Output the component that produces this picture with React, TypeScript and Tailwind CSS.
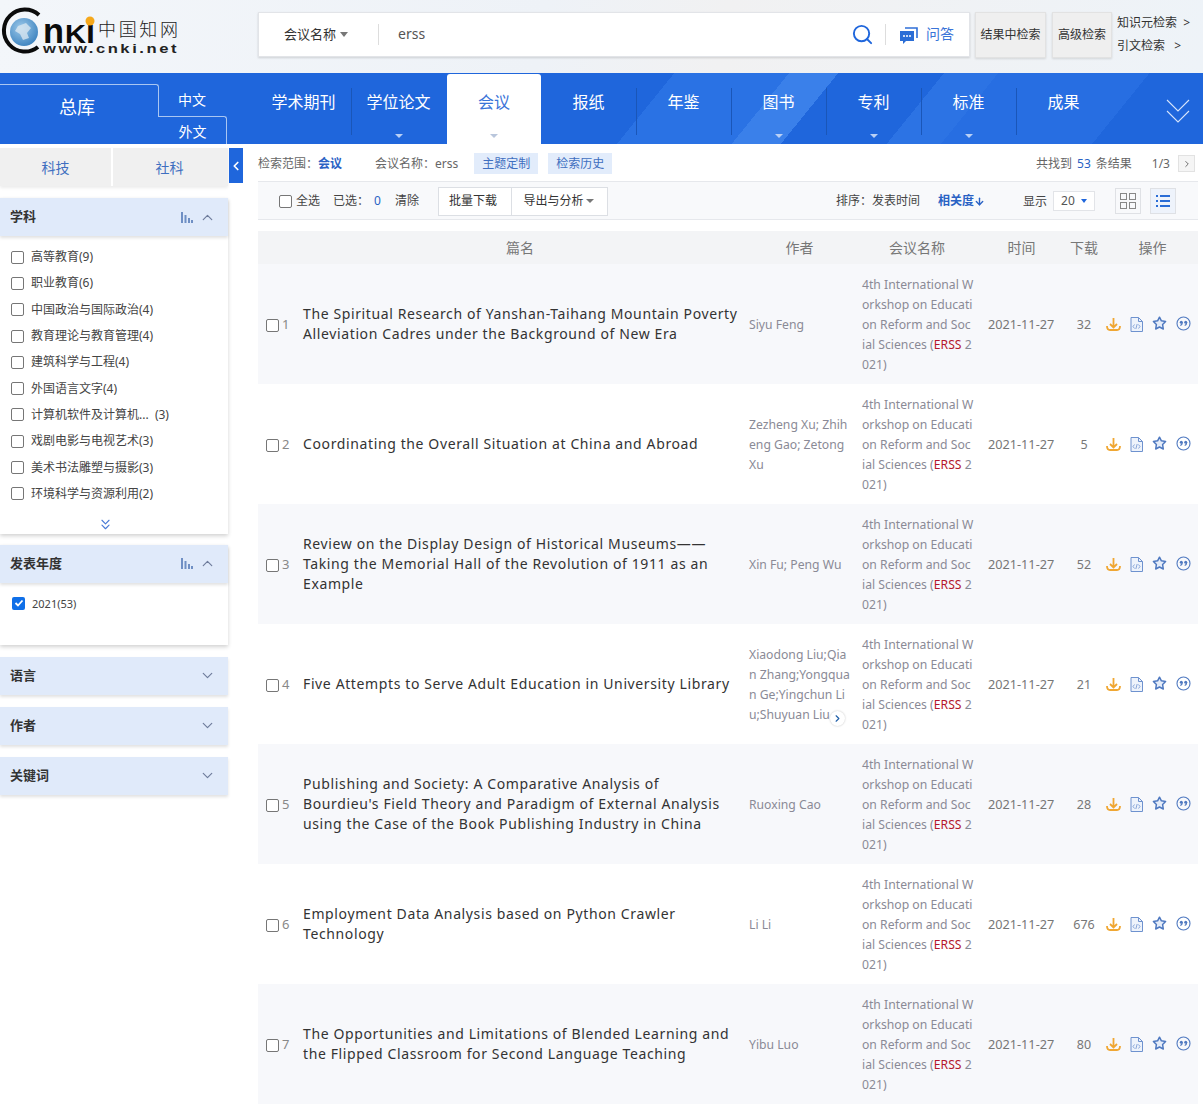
import { ChevronDown, ChevronLeft, ChevronRight, ChevronUp, ChevronsDown, ArrowDown, Search } from "lucide-react";

const navItems = [
  { label: "学术期刊", arrow: false },
  { label: "学位论文", arrow: true },
  { label: "会议", arrow: true, active: true },
  { label: "报纸", arrow: false },
  { label: "年鉴", arrow: false },
  { label: "图书", arrow: true },
  { label: "专利", arrow: true },
  { label: "标准", arrow: true },
  { label: "成果", arrow: false },
];

const subjects = [
  "高等教育(9)",
  "职业教育(6)",
  "中国政治与国际政治(4)",
  "教育理论与教育管理(4)",
  "建筑科学与工程(4)",
  "外国语言文字(4)",
  "计算机软件及计算机...  (3)",
  "戏剧电影与电视艺术(3)",
  "美术书法雕塑与摄影(3)",
  "环境科学与资源利用(2)",
];

const rows = [
  { title: "The Spiritual Research of Yanshan-Taihang Mountain Poverty Alleviation Cadres under the Background of New Era", author: ["Siyu Feng"], count: "32" },
  { title: "Coordinating the Overall Situation at China and Abroad", author: ["Zezheng Xu; Zhih", "eng Gao; Zetong", "Xu"], count: "5" },
  { title: "Review on the Display Design of Historical Museums—— Taking the Memorial Hall of the Revolution of 1911 as an Example", author: ["Xin Fu; Peng Wu"], count: "52" },
  { title: "Five Attempts to Serve Adult Education in University Library", author: ["Xiaodong Liu;Qia", "n Zhang;Yongqua", "n Ge;Yingchun Li", "u;Shuyuan Liu"], count: "21", more: true },
  { title: "Publishing and Society: A Comparative Analysis of Bourdieu's Field Theory and Paradigm of External Analysis using the Case of the Book Publishing Industry in China", author: ["Ruoxing Cao"], count: "28" },
  { title: "Employment Data Analysis based on Python Crawler Technology", author: ["Li Li"], count: "676" },
  { title: "The Opportunities and Limitations of Blended Learning and the Flipped Classroom for Second Language Teaching", author: ["Yibu Luo"], count: "80" },
];

function Logo() {
  return (
    <svg width="182" height="58" viewBox="0 0 182 58" className="shrink-0">
      <defs>
        <radialGradient id="globe" cx="0.4" cy="0.35" r="0.8">
          <stop offset="0" stopColor="#9cc9ea" />
          <stop offset="1" stopColor="#2f78b8" />
        </radialGradient>
      </defs>
      <path d="M39 15 A21 21 0 1 0 38 47" fill="none" stroke="#0b0b0b" strokeWidth="4" />
      <circle cx="24" cy="32" r="14" fill="url(#globe)" />
      <path d="M18 26l8-3 5 5-4 5 2 5-6 2-3-6-5-3z" fill="#dfeaf2" opacity="0.75" />
      <text x="43" y="43" fontFamily="Liberation Sans" fontWeight="700" fontSize="35" fill="#0b0b0b" textLength="21" lengthAdjust="spacingAndGlyphs">n</text>
      <text x="65" y="43" fontFamily="Liberation Sans" fontWeight="700" fontSize="25" fill="#0b0b0b" textLength="21" lengthAdjust="spacingAndGlyphs">K</text>
      <text x="86" y="43" fontFamily="Liberation Sans" fontWeight="700" fontSize="33" fill="#0b0b0b" textLength="9" lengthAdjust="spacingAndGlyphs">i</text>
      <circle cx="90" cy="21" r="4.500" fill="#f5a81c" />
      <text x="98" y="36" fontFamily="Noto Sans CJK SC" fontWeight="300" fontSize="18" fill="#222" textLength="80">中国知网</text>
      <text x="43" y="53" fontFamily="Liberation Sans" fontWeight="700" fontSize="13" letterSpacing="2" fill="#222" textLength="136" lengthAdjust="spacingAndGlyphs">www.cnki.net</text>
    </svg>
  );
}

function ChatIcon() {
  return (
    <svg width="20" height="20" viewBox="0 0 20 20">
      <path d="M6 3h12v10" fill="none" stroke="#2f6fd8" strokeWidth="1.600" />
      <path d="M1 6h14v10H7l-3 3v-3H1z" fill="#2a6dd6" />
      <circle cx="5" cy="11" r="1" fill="#fff" />
      <circle cx="8" cy="11" r="1" fill="#fff" />
      <circle cx="11" cy="11" r="1" fill="#fff" />
    </svg>
  );
}

function BarsIcon() {
  return (
    <svg width="13" height="11" viewBox="0 0 13 11">
      <path d="M1 0h2v11H1zM4.500 3h2v8h-2zM8 6h2v5H8zM11 8h2v3h-2z" fill="#6f8fc4" />
    </svg>
  );
}

function DownloadIcon() {
  return (
    <svg width="15" height="15" viewBox="0 0 15 15" fill="none" stroke="#f0a733" strokeWidth="1.800">
      <path d="M7.500 1v9.500M4 7l3.500 3.500L11 7" />
      <path d="M1 9c0 2.800 1.500 4 3 4h7c1.500 0 3-1.200 3-4" />
    </svg>
  );
}

function HtmlIcon() {
  return (
    <svg width="13" height="15" viewBox="0 0 13 15" fill="none" stroke="#6e92cf" strokeWidth="1">
      <path d="M1 .5h7.500l4 4v10H1z" fill="#eef3fb" />
      <path d="M8.500.5v4h4" />
      <path d="M4.500 7.500l-1.500 2 1.500 2M8.500 7.500l1.500 2-1.500 2M7.200 7l-1.400 5" strokeWidth="0.800" />
    </svg>
  );
}

function StarIcon() {
  return (
    <svg width="15" height="15" viewBox="0 0 15 15" className="mt-[-2px]" fill="#e4ecf9" stroke="#4f79c0" strokeWidth="1.500" strokeLinejoin="round">
      <path d="M7.500 1.200l1.900 3.600 4.200.7-3 3 .7 4.500-3.800-2-3.800 2 .7-4.500-3-3 4.200-.7z" />
    </svg>
  );
}

function QuoteIcon() {
  return (
    <svg width="15" height="15" viewBox="0 0 15 15" fill="none" className="mt-[-2px]">
      <circle cx="7.500" cy="7.500" r="6.500" stroke="#4f79c0" strokeWidth="1.100" />
      <circle cx="5.300" cy="6.300" r="1.500" fill="#4f79c0" />
      <circle cx="9.700" cy="6.300" r="1.500" fill="#4f79c0" />
      <path d="M6.300 6.500c0 1.500-.7 2.600-2 3.100M10.700 6.500c0 1.500-.7 2.600-2 3.100" stroke="#4f79c0" strokeWidth="1.100" />
    </svg>
  );
}

function Check({ checked = false }: { checked?: boolean }) {
  if (checked) {
    return (
      <span className="flex h-[13px] w-[13px] shrink-0 items-center justify-center rounded-[2px] bg-[#0f6fe8]">
        <svg width="10" height="10" viewBox="0 0 10 10" fill="none" stroke="#fff" strokeWidth="1.800">
          <path d="M1.500 5l2.500 2.500 4.500-5" />
        </svg>
      </span>
    );
  }
  return <span className="block h-[13px] w-[13px] shrink-0 rounded-[2px] border border-[#767676] bg-white" />;
}

function SectionHead({ title, open, bars }: { title: string; open: boolean; bars?: boolean }) {
  return (
    <div className="flex h-[38px] items-center bg-[#e0eafa] pl-[10px] pr-[12px] shadow-[0_2px_3px_rgba(0,0,0,0.12)]">
      <span className="flex-1 text-[13px] font-bold text-[#333]">{title}</span>
      {bars && <BarsIcon />}
      {open ? (
        <ChevronUp size={17} strokeWidth={1.700} className="ml-[6px] text-[#6f7d9c]" />
      ) : (
        <ChevronDown size={17} strokeWidth={1.700} className="ml-[6px] text-[#6f7d9c]" />
      )}
    </div>
  );
}

function Sidebar() {
  return (
    <aside className="relative w-[228px] shrink-0 pt-[4px]">
      <div className="flex h-[38px] gap-[2px] text-[14px] text-[#3f6fc0] shadow-[0_2px_3px_rgba(0,0,0,0.08)]">
        <div className="flex w-[111px] items-center justify-center bg-[#f0f0f0]">科技</div>
        <div className="flex flex-1 items-center justify-center bg-[#f0f0f0] pr-[2px]">社科</div>
      </div>
      <button className="absolute left-[229px] top-[4px] flex h-[35px] w-[14px] items-center justify-center bg-[#1f66dc] text-white">
        <ChevronLeft size={14} strokeWidth={3} />
      </button>

      <section className="mt-[12px] bg-white shadow-[0_2px_4px_rgba(0,0,0,0.18)]">
        <SectionHead title="学科" open bars />
        <ul className="pt-[8px]">
          {subjects.map((s) => (
            <li key={s} className="flex h-[26.3px] items-center gap-[7px] whitespace-pre pl-[11px] text-[12px] text-[#444]">
              <Check />
              {s}
            </li>
          ))}
        </ul>
        <div className="flex h-[27px] justify-center pt-[9px] text-[#4a7ad6]">
          <ChevronsDown size={17} strokeWidth={1.600} className="ml-[-20px] translate-x-[1px]" />
        </div>
      </section>

      <section className="mt-[11px] bg-white shadow-[0_2px_4px_rgba(0,0,0,0.18)]">
        <SectionHead title="发表年度" open bars />
        <div className="h-[62px] pt-[13px]">
          <div className="flex items-center gap-[7px] pl-[12px] text-[11px] leading-[15px] text-[#444]">
            <Check checked />
            2021(53)
          </div>
        </div>
      </section>

      <div className="mt-[12px]">
        <SectionHead title="语言" open={false} />
      </div>
      <div className="mt-[12px]">
        <SectionHead title="作者" open={false} />
      </div>
      <div className="mt-[12px]">
        <SectionHead title="关键词" open={false} />
      </div>
    </aside>
  );
}

export default function App() {
  return (
    <div className="h-[1107px] w-[1203px] overflow-hidden bg-white font-['Noto_Sans','Noto_Sans_CJK_SC',sans-serif]">
      <header className="flex h-[73px] items-start bg-[linear-gradient(100deg,#f3f6fa_0%,#eef2f7_45%,#f1f1f2_60%,#eef3f8_100%)] pt-[12px]">
        <div className="mt-[-12px] w-[258px] shrink-0">
          <Logo />
        </div>
        <div className="flex h-[45px] w-[712px] items-center border border-[#e2e4e8] bg-white pl-[25px] pr-[15px] shadow-[0_1px_2px_rgba(0,0,0,0.15)]">
          <span className="text-[13px] text-[#333]">会议名称</span>
          <span className="ml-[4px] h-0 w-0 border-x-[4px] border-t-[5px] border-x-transparent border-t-[#777]" />
          <span className="ml-[30px] h-[21px] w-px bg-[#ddd]" />
          <span className="ml-[19px] mb-[2px] flex-1 text-[14px] text-[#555]">erss</span>
          <Search size={23} strokeWidth={2} className="text-[#1f66dc]" />
          <span className="ml-[11px] mr-[13px] h-[21px] w-px bg-[#ddd]" />
          <ChatIcon />
          <span className="ml-[7px] mb-[2px] text-[14px] text-[#3a74d8]">问答</span>
        </div>
        <button className="ml-[5px] h-[46px] w-[71px] border border-[#e2e2e2] bg-[#efefef] text-[12px] text-[#333] shadow-[0_1px_2px_rgba(0,0,0,0.12)]">结果中检索</button>
        <button className="ml-[6px] h-[46px] w-[60px] border border-[#e2e2e2] bg-[#efefef] text-[12px] text-[#333] shadow-[0_1px_2px_rgba(0,0,0,0.12)]">高级检索</button>
        <div className="ml-[5px] mt-[3px] flex flex-col gap-[7px] text-[12px] leading-[16px] text-[#333]">
          <span className="whitespace-pre">知识元检索  &gt;</span>
          <span className="whitespace-pre">引文检索   &gt;</span>
        </div>
      </header>

      <nav className="flex h-[71px] bg-[linear-gradient(129deg,#1f66dc_0%,#1f66dc_53.5%,#2a72e4_53.5%,#2a72e4_62.6%,#3a80ea_62.6%,#3a80ea_66.5%,#1f66dc_66.5%,#1f66dc_74.9%,#2c73e4_74.9%,#2c73e4_79.2%,#276ee2_79.2%,#276ee2_91.2%,#1f66dc_91.2%,#1f66dc_100%)] text-white">
        <div className="relative w-[256px] shrink-0">
          <div className="absolute left-0 top-[11px] h-[33px] w-[159px] rounded-tr-[3px] border-r border-t border-[#a9c6f2]" />
          <div className="absolute left-0 top-[21px] w-[154px] text-center text-[18px] leading-[26px]">总库</div>
          <div className="absolute left-[178px] top-[16px] text-[14px] leading-[22px]">中文</div>
          <div className="absolute left-[158px] top-[43px] flex h-[28px] w-[69px] items-start justify-center rounded-tr-[3px] border-r border-t border-[#a9c6f2] pl-[1px] text-[14px] leading-[29px]">外文</div>
        </div>
        {navItems.map((item, i) => (
          <div
            key={item.label}
            className={
              item.active
                ? "relative mt-[1px] flex h-[70px] w-[94px] ml-[1px] flex-col items-center rounded-t-[3px] bg-white pt-[16px] text-[#3a74d8]"
                : "relative flex h-[71px] w-[95px] flex-col items-center pt-[17px]"
            }
          >
            <span className="text-[16px] leading-[24px]">{item.label}</span>
            {item.arrow && (
              <span
                className={
                  item.active
                    ? "absolute bottom-[6px] h-0 w-0 border-x-[4px] border-t-[4px] border-x-transparent border-t-[#b9c6dc]"
                    : "absolute bottom-[6px] h-0 w-0 border-x-[4px] border-t-[4px] border-x-transparent border-t-[#b9d0f5]"
                }
              />
            )}
            {i < navItems.length - 1 && !item.active && navItems[i + 1].active !== true && (
              <span className="absolute right-[-1px] top-[15px] h-[47px] w-px bg-[#1a56b8]" />
            )}
          </div>
        ))}
        <div className="ml-[55px] pt-[26px]">
          <svg width="24" height="24" viewBox="0 0 24 24" fill="none" stroke="#d7e5fb" strokeWidth="1.100">
            <path d="M1 1l11 11L23 1M1 12l11 11 11-11" />
          </svg>
        </div>
      </nav>

      <div className="flex">
        <Sidebar />
        <main className="ml-[30px] w-[940px] shrink-0">
          <div className="flex h-[37px] items-center pt-[2px] text-[12px] text-[#666]">
            <span>检索范围：</span>
            <span className="font-bold text-[#2a62c4]">会议</span>
            <span className="ml-[33px]">会议名称：erss</span>
            <span className="ml-[16px] flex h-[21px] w-[64px] items-center justify-center bg-[#e2ecfb] text-[#3f6fc0]">主题定制</span>
            <span className="ml-[10px] flex h-[21px] w-[64px] items-center justify-center bg-[#e2ecfb] text-[#3f6fc0]">检索历史</span>
            <span className="ml-auto">共找到</span>
            <span className="mx-[5px] text-[#2a62c4]">53</span>
            <span>条结果</span>
            <span className="ml-[20px]">1/3</span>
            <span className="ml-[8px] mr-[3px] flex h-[17px] w-[17px] items-center justify-center border border-[#e2e2e2] bg-[#f5f5f5] text-[#555]">
              <ChevronRight size={10} />
            </span>
          </div>

          <div className="flex h-[39px] items-center border-y border-[#e6e8ec] bg-[#f8f9fb] pt-[1px] text-[12px] text-[#444]">
            <span className="ml-[21px]"><Check /></span>
            <span className="ml-[4px]">全选</span>
            <span className="ml-[13px]">已选：</span>
            <span className="ml-[5px] text-[#2a62c4]">0</span>
            <span className="ml-[14px]">清除</span>
            <button className="ml-[19px] h-[29px] w-[74px] border border-[#dcdfe4] bg-white pr-[4px] text-[12px] text-[#333]">批量下载</button>
            <button className="flex h-[29px] w-[96px] items-center justify-center gap-[3px] border border-l-0 border-[#dcdfe4] bg-white pr-[1px] text-[12px] text-[#333]">
              导出与分析
              <span className="h-0 w-0 border-x-[4px] border-t-[4px] border-x-transparent border-t-[#777]" />
            </button>
            <span className="ml-[228px]">排序：发表时间</span>
            <span className="ml-[18px] font-bold text-[#2a62c4]">相关度</span>
            <ArrowDown size={11} strokeWidth={3} className="text-[#2a62c4]" />
            <span className="ml-[38px] mt-[2px]">显示</span>
            <span className="ml-[6px] flex h-[20px] w-[42px] items-center justify-center gap-[6px] border border-[#e2e4e8] bg-white text-[#555]">
              20
              <span className="h-0 w-0 border-x-[3px] border-t-[4px] border-x-transparent border-t-[#1f66dc]" />
            </span>
            <span className="ml-[20px] grid h-[26px] w-[26px] grid-cols-2 gap-[2px] border border-[#dfe1e5] p-[4px]">
              <i className="border border-[#888]" /><i className="border border-[#888]" />
              <i className="border border-[#888]" /><i className="border border-[#888]" />
            </span>
            <span className="ml-[9px] flex h-[26px] w-[26px] flex-col justify-center gap-[3px] border border-[#dfe1e5] bg-[#eef3fb] px-[5px]">
              {[0, 1, 2].map((n) => (
                <span key={n} className="flex gap-[2px]">
                  <i className="block h-[2px] w-[2px] bg-[#2a6dd6]" />
                  <i className="block h-[2px] flex-1 bg-[#2a6dd6]" />
                </span>
              ))}
            </span>
          </div>

          <div className="mt-[11px] grid h-[33px] grid-cols-[45px_446px_113px_126px_75px_42px_93px] items-center bg-[#f3f4f6] pb-[1px] text-center text-[14px] text-[#777]">
            <span />
            <span className="pr-[12px]">篇名</span>
            <span className="pr-[12px]">作者</span>
            <span className="pr-[16px]">会议名称</span>
            <span className="pr-[8px]">时间</span>
            <span>下载</span>
            <span className="pl-[2px]">操作</span>
          </div>

          {rows.map((row, i) => (
            <div
              key={row.title}
              className={
                i % 2 === 0
                  ? "grid h-[120px] grid-cols-[45px_446px_113px_126px_75px_42px_93px] items-center bg-[#f7f8fb]"
                  : "grid h-[120px] grid-cols-[45px_446px_113px_126px_75px_42px_93px] items-center bg-white"
              }
            >
              <div className="flex items-center gap-[3px] pl-[8px] pt-[2px] text-[13px] text-[#888]">
                <Check />
                {i + 1}
              </div>
              <div className="pr-[11px] text-[14px] leading-[20px] tracking-[0.62px] text-[#333]">{row.title}</div>
              <div className="relative whitespace-nowrap pt-[2px] text-[12.2px] leading-[20px] text-[#8a8a96]">
                {row.author.map((line) => (
                  <div key={line}>{line}</div>
                ))}
                {row.more && (
                  <span className="absolute bottom-[-1px] left-[81px] flex h-[15px] w-[15px] items-center justify-center rounded-full bg-white text-[#1f5fa8] shadow-[0_0_2px_rgba(0,0,0,0.25)]">
                    <ChevronRight size={11} strokeWidth={2.500} />
                  </span>
                )}
              </div>
              <div className="whitespace-nowrap pt-[2px] text-[12.2px] leading-[20px] text-[#8a8a96]">
                <div>4th International W</div>
                <div>orkshop on Educati</div>
                <div>on Reform and Soc</div>
                <div>ial Sciences (<span className="text-[#b5172c]">ERSS</span> 2</div>
                <div>021)</div>
              </div>
              <div className="pt-[2px] text-[12.7px] text-[#777]">2021-11-27</div>
              <div className="pt-[2px] text-center text-[12.5px] text-[#777]">{row.count}</div>
              <div className="flex items-center gap-[9px] pl-[1px] pt-[1px]">
                <DownloadIcon />
                <HtmlIcon />
                <StarIcon />
                <QuoteIcon />
              </div>
            </div>
          ))}
        </main>
      </div>
    </div>
  );
}
